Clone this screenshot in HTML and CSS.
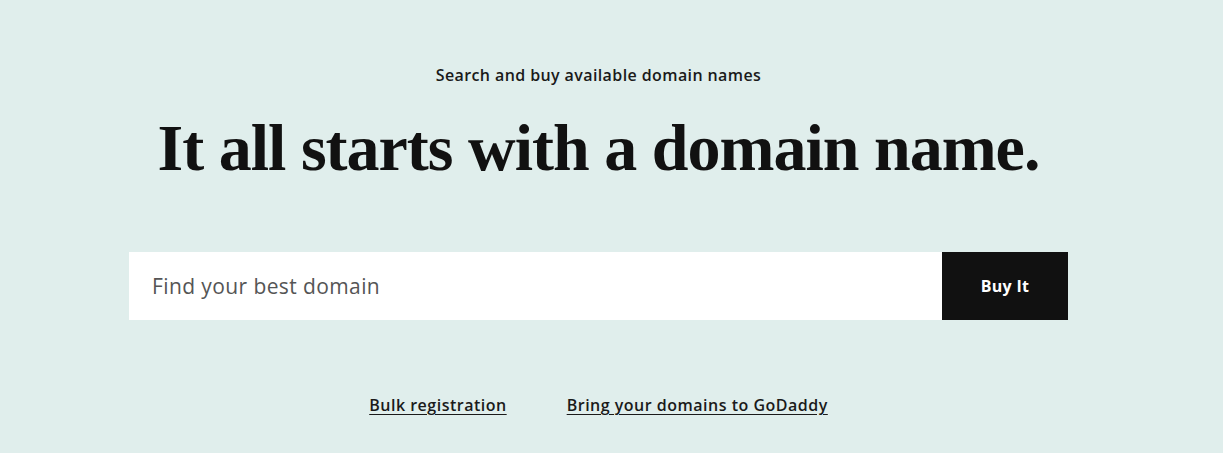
FILE: index.html
```html
<!DOCTYPE html>
<html lang="en">
<head>
	<meta charset="UTF-8">
	<meta name="viewport" content="width=device-width, initial-scale=1.0">
	<title>Domain search</title>
	<link rel="stylesheet" href="styles.css">
</head>
<body>
<section class="hero">
	<p class="hero__eyebrow">Search and buy available domain names</p>
	<h1 class="hero__title">It all starts with a domain name.</h1>
	<form class="search" onsubmit="return false;">
		<input class="search__input" type="text" placeholder="Find your best domain">
		<button class="search__button" type="submit">Buy It</button>
	</form>
	<div class="links">
		<a href="#">Bulk registration</a>
		<a href="#">Bring your domains to GoDaddy</a>
	</div>
</section>
</body>
</html>
```

FILE: styles.css
```css
html, body {
	margin: 0;
	padding: 0;
}
body {
	background: #e0eeec;
	color: #111;
	font-family: "Open Sans", "Liberation Sans", sans-serif;
}
.hero {
	display: flex;
	flex-direction: column;
	align-items: center;
	padding: 64px 26px 0 0;
}
.hero__eyebrow {
	margin: 0;
	font-size: 16px;
	font-weight: 600;
	line-height: 22px;
	letter-spacing: 0.4px;
	color: #1a1a1a;
}
.hero__title {
	margin: 22px 0 0;
	font-family: "Liberation Serif", "DejaVu Serif", serif;
	font-weight: 700;
	font-size: 66px;
	line-height: 80px;
	letter-spacing: -1px;
	color: #111;
}
.search {
	display: flex;
	width: 939px;
	height: 68px;
	margin-top: 64px;
}
.search__input {
	flex: 1;
	border: 0;
	margin: 0;
	padding: 0 23px;
	background: #fff;
	font-family: inherit;
	font-size: 21px;
	letter-spacing: 0.4px;
	color: #111;
	outline: none;
}
.search__input::placeholder {
	color: #555;
}
.search__button {
	width: 126px;
	border: 0;
	margin: 0;
	background: #111;
	color: #fff;
	font-family: inherit;
	font-size: 16px;
	font-weight: 700;
	letter-spacing: 0.3px;
	cursor: pointer;
}
.links {
	display: flex;
	gap: 60px;
	margin-top: 74px;
}
.links a {
	color: #1a1a1a;
	font-size: 16px;
	font-weight: 600;
	letter-spacing: 0.5px;
	text-decoration: underline;
	text-underline-offset: 3px;
}
```
